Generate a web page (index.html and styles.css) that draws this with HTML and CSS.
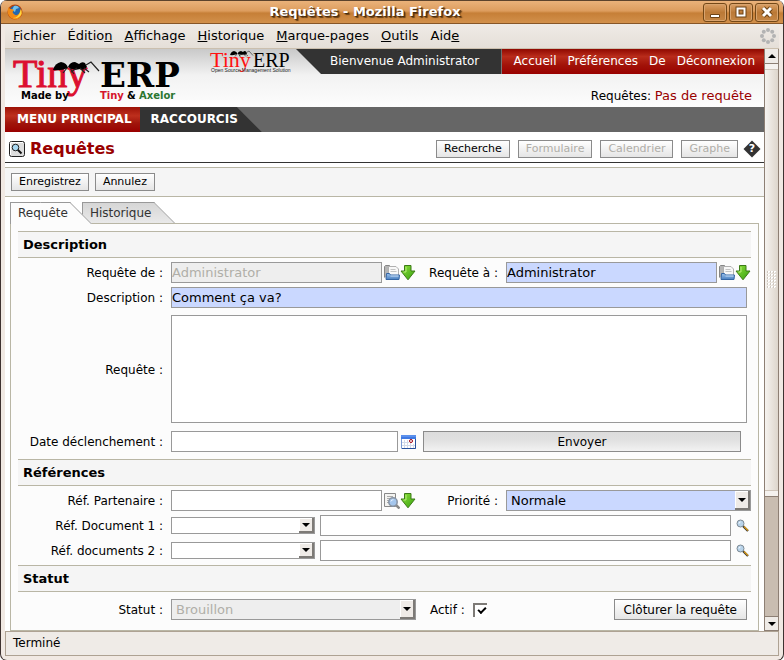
FILE: index.html
```html
<!DOCTYPE html>
<html lang="fr">
<head>
<meta charset="utf-8">
<title>Requêtes - Mozilla Firefox</title>
<link rel="stylesheet" href="styles.css">
</head>
<body>
<svg class="defs" width="0" height="0" aria-hidden="true">
  <defs>
    <linearGradient id="green" x1="0" y1="0" x2="1" y2="1"><stop offset="0" stop-color="#8fe03a"/><stop offset="1" stop-color="#35a010"/></linearGradient>
    <linearGradient id="blue" x1="0" y1="0" x2="0" y2="1"><stop offset="0" stop-color="#9cc2ec"/><stop offset="1" stop-color="#4a80c0"/></linearGradient>
    <symbol id="arrow" viewBox="0 0 16 16"><path d="M4.500 .5h6.500v5.500h4L8 14.800 1 6h3.500z" fill="url(#green)" stroke="#3c7a16"/><path d="M6 2v5H3.500" fill="none" stroke="#b4ee78"/></symbol>
    <symbol id="folder" viewBox="0 0 16 16"><path d="M.5 12.500V1.500l1-1h4l1 1.500h2v10" fill="#b5b5b5" stroke="#858585"/><path d="M4.500 1.500h7.500l2.500 2.500v6.500h-10z" fill="#f8f8f8" stroke="#b0b0b0"/><path d="M6.500 4.500h5M6.500 6.500h6" stroke="#c4c4c4"/><path d="M2.500 8.500h3l1 1.500h9l-.5 4.500H2z" fill="url(#blue)" stroke="#3465a4"/><path d="M6.500 11h8" stroke="#c5dcf5"/></symbol>
    <symbol id="find" viewBox="0 0 16 16"><path d="M.5.5h11v13H.5z" fill="#f3f3f1" stroke="#888"/><path d="M3 3.500h6M3 5.500h3M3 7.500h2M3 9.500h2" stroke="#aaa"/><path d="M12 12l3.500 3.500" stroke="#888" stroke-width="2.500"/><circle cx="9" cy="9" r="4.200" fill="#a4c6ed" stroke="#8793a3" stroke-width="1.500"/><path d="M6.800 8.500Q7.500 6.500 9.500 6.700" fill="none" stroke="#e6f1ff"/></symbol>
    <symbol id="lens" viewBox="0 0 13 13"><path d="M7 7l5 5" stroke="#333" stroke-width="2.200"/><path d="M8 7.500l4 4" stroke="#dd9d18" stroke-width="1.200"/><circle cx="4.500" cy="4.500" r="3.500" fill="#b8d3ea" stroke="#7d8993"/><path d="M3 4.500q0-1.500 1.500-1.500" fill="none" stroke="#fff"/></symbol>
    <symbol id="ants" viewBox="0 0 48 20"><path d="M0 10Q2 3 8 2Q14 3 15 8Q8 11 0 10z"/><path d="M15 7Q17 2 22 2L26 4Q29 1 32 3L34 7Q31 11 27 9Q20 11 15 7z"/><path d="M14 8l-4 5M17 8l4 6M24 8l-6 4M27 8l5 5M31 8l5 4M33 5l5-3 8 9" fill="none" stroke="#222" stroke-width="1.200"/></symbol>
  </defs>
</svg>
<div class="window">
  <header class="titlebar">
    <svg class="firefox" viewBox="0 0 16 16"><circle cx="8" cy="8" r="7.500" fill="#b6440c"/><circle cx="8.500" cy="7" r="5.500" fill="#2368ae"/><path d="M7 2q4-1 5 2l-3 1-1 3-3-2z" fill="#72c3ed"/><path d="M1.500 3L3 5q2-.5 4 1L5.500 8Q7 12 10 11q3-1 3.500-6 3 5-.5 8.500-4 3.500-9 .5Q-1 10 1.500 3z" fill="#f08a16"/><path d="M14 5q2 5-2 8-3 2-6 1 6 0 8-9z" fill="#ffd83f"/></svg>
    <h1 class="window-title">Requêtes - Mozilla Firefox</h1>
    <div class="window-buttons">
      <button type="button" aria-label="Réduire"><svg viewBox="0 0 22 17"><path d="M6.500 10.500h9v3h-9z" fill="#fff" stroke="#6d4315"/></svg></button>
      <button type="button" aria-label="Agrandir"><svg viewBox="0 0 22 17"><path d="M7.500 4.500h7v7h-7z" fill="none" stroke="#6d4315" stroke-width="4"/><path d="M7.500 4.500h7v7h-7z" fill="none" stroke="#fff" stroke-width="2"/></svg></button>
      <button type="button" aria-label="Fermer"><svg viewBox="0 0 22 17"><path d="M7 4l8 8M15 4l-8 8" stroke="#6d4315" stroke-width="5"/><path d="M7 4l8 8M15 4l-8 8" stroke="#fff" stroke-width="3"/></svg></button>
    </div>
  </header>
  <nav class="menubar">
    <a href="#"><u>F</u>ichier</a><a href="#">Éditio<u>n</u></a><a href="#"><u>A</u>ffichage</a><a href="#"><u>H</u>istorique</a><a href="#"><u>M</u>arque-pages</a><a href="#"><u>O</u>utils</a><a href="#">Aid<u>e</u></a>
    <svg class="throbber" viewBox="0 0 16 16" fill="#b3b3b3"><circle cx="8" cy="2" r="2"/><circle cx="12.200" cy="3.800" r="2"/><circle cx="14" cy="8" r="2"/><circle cx="12.200" cy="12.200" r="2"/><circle cx="8" cy="14" r="2"/><circle cx="3.800" cy="12.200" r="2"/><circle cx="2" cy="8" r="2"/><circle cx="3.800" cy="3.800" r="2"/></svg>
  </nav>
  <div class="viewport">
    <main class="page">
      <div class="banner">
        <svg class="logo" viewBox="0 0 180 50">
          <text x="0" y="38" class="logo-tiny">Tiny</text>
          <text x="87" y="38" class="logo-erp">ERP</text>
          <use href="#ants" x="40" y="11" width="48" height="20"/>
          <text x="8" y="50" class="logo-made">Made by</text>
          <text x="87" y="50" class="logo-made red">Tiny</text>
          <text x="114" y="50" class="logo-made">&amp;</text>
          <text x="126" y="50" class="logo-made green">Axelor</text>
        </svg>
        <svg class="logo-small" viewBox="0 0 86 26">
          <text x="0" y="18" class="small-tiny">Tiny</text>
          <text x="43" y="18" class="small-erp">ERP</text>
          <use href="#ants" x="20" y="1" width="24" height="10"/>
          <text x="1" y="23" class="small-line">Open Source Management Solution</text>
        </svg>
        <div class="account">
          <div class="account-bar">
            <span class="welcome">Bienvenue Administrator</span>
            <nav class="account-links"><a href="#">Accueil</a><a href="#">Préférences</a><a href="#">De</a><a href="#">Déconnexion</a></nav>
          </div>
          <p class="requests">Requêtes: <a href="#">Pas de requête</a></p>
        </div>
      </div>
      <nav class="mainnav"><a class="main" href="#">MENU PRINCIPAL</a><a class="shortcuts" href="#">RACCOURCIS</a></nav>
      <div class="heading">
        <svg class="search-icon" viewBox="0 0 16 16"><rect x=".5" y=".5" width="15" height="15" rx="2" fill="#ddd" stroke="#222"/><path d="M1.500 14V1.500H14" stroke="#fff" fill="none"/><path d="M8.500 8.500l4 4" stroke="#111" stroke-width="2"/><circle cx="6.500" cy="6.500" r="3.300" fill="#a8d8f2" stroke="#222"/></svg>
        <h2>Requêtes</h2>
        <div class="views">
          <button class="btn" type="button">Recherche</button><button class="btn" type="button" disabled>Formulaire</button><button class="btn" type="button" disabled>Calendrier</button><button class="btn" type="button" disabled>Graphe</button>
        </div>
        <a class="help" href="#" aria-label="Aide">?</a>
      </div>
      <div class="toolbar"><button class="btn" type="button">Enregistrez</button><button class="btn" type="button">Annulez</button></div>
      <div class="tabs"><button class="tab active" type="button"><span>Requête</span></button><button class="tab" type="button"><span>Historique</span></button></div>
      <form class="panel">
        <h3>Description</h3>
        <div class="fields">
          <label for="from">Requête de :</label>
          <div class="cell"><input id="from" type="text" value="Administrator" disabled><svg class="icon"><use href="#folder"/></svg><svg class="icon"><use href="#arrow"/></svg></div>
          <label for="to">Requête à :</label>
          <div class="cell"><input id="to" class="required" type="text" value="Administrator"><svg class="icon"><use href="#folder"/></svg><svg class="icon"><use href="#arrow"/></svg></div>
          <label for="desc">Description :</label>
          <div class="cell wide inset"><input id="desc" class="required" type="text" value="Comment ça va?"></div>
          <label for="body">Requête :</label>
          <div class="cell wide inset"><textarea id="body"></textarea></div>
          <label for="date">Date déclenchement :</label>
          <div class="wide date-row"><input id="date" type="text">
            <svg class="calendar" viewBox="0 0 15 14"><path d="M.5.5h14v13H.5z" fill="#fff" stroke="#7c9bd6"/><path d="M0 0h15v4H0z" fill="#3f79e2"/><path d="M0 1h15" stroke="#76a6f5"/><path d="M14.500 4v9.500H1" fill="none" stroke="#27509c"/><path d="M3.500 5v8M6.500 5v8M9.500 5v8M12.500 9v4M1 7.500h7M1 10.500h13" stroke="#d3daea"/><circle cx="10" cy="6" r="1.500" fill="#fff" stroke="#a00010"/></svg>
            <button class="btn send" type="button">Envoyer</button></div>
        </div>
        <h3 class="after-date">Références</h3>
        <div class="fields">
          <label for="partner">Réf. Partenaire :</label>
          <div class="cell"><input id="partner" type="text"><svg class="icon"><use href="#find"/></svg><svg class="icon"><use href="#arrow"/></svg></div>
          <label for="prio">Priorité :</label>
          <div class="select"><select id="prio" class="required"><option>Normale</option></select><i></i></div>
          <label for="doc1">Réf. Document 1 :</label>
          <div class="cell wide doc"><div class="select short"><select id="doc1"><option></option></select><i></i></div><input type="text" aria-label="Document 1"><svg class="lens"><use href="#lens"/></svg></div>
          <label for="doc2">Réf. documents 2 :</label>
          <div class="cell wide doc"><div class="select short"><select id="doc2"><option></option></select><i></i></div><input type="text" aria-label="Document 2"><svg class="lens"><use href="#lens"/></svg></div>
        </div>
        <h3>Statut</h3>
        <div class="fields status-row">
          <label for="state">Statut :</label>
          <div class="select"><select id="state" disabled><option>Brouillon</option></select><i></i></div>
          <div class="cell active-cell"><label for="active">Actif :</label><input id="active" type="checkbox" checked><button class="btn close" type="button">Clôturer la requête</button></div>
        </div>
      </form>
    </main>
    <div class="scrollbar">
      <button class="up" type="button" aria-label="Haut"></button>
      <div class="track"><div class="thumb"><span class="grip"></span></div></div>
      <button class="down" type="button" aria-label="Bas"></button>
    </div>
  </div>
  <footer class="statusbar">Terminé</footer>
</div>
</body>
</html>
```
FILE: styles.css
```css
* { box-sizing: border-box; }
body { margin: 0; background: #fff; color: #000; font: 12px/16px "DejaVu Sans", sans-serif; }
h1, h2, h3, p { margin: 0; }
button, input, select, textarea { font: inherit; margin: 0; border-radius: 0; }
a { color: inherit; text-decoration: none; }
svg { display: block; flex: none; }
.defs { position: absolute; }

.window { min-height: 100vh; display: flex; flex-direction: column; padding: 0 4px 4px; border: 1px solid #3e3230; border-top: 0; border-radius: 7px; background: #f1e9e3; overflow: hidden; }

.titlebar { display: flex; align-items: center; height: 24px; margin: 0 -4px; padding: 0 4px 0 6px; border-top: 1px solid #5c432c; border-bottom: 1px solid #875627; background: linear-gradient(#eab27a, #dd9d5e 45%, #c67f37 55%, #d2904b); }
.firefox { width: 16px; height: 16px; }
.window-title { flex: 1; padding-left: 4px; text-align: center; font-size: 13px; color: #fff; text-shadow: 1px 1px 1px #40260c, 2px 2px 1px #6b4216; }
.window-buttons { display: flex; gap: 2px; }
.window-buttons button { width: 24px; height: 19px; padding: 0; border: 1px solid #744817; border-radius: 3px; background: linear-gradient(#dba066, #bb7936 50%, #c58645); box-shadow: inset 0 0 0 1px #d9a46e; }

.menubar { display: flex; align-items: center; gap: 12px; height: 25px; padding: 0 3px 0 8px; font-size: 13px; background: linear-gradient(#efebe6, #e5dfd8); border-bottom: 1px solid #cbbfae; }
.throbber { width: 16px; height: 16px; margin-left: auto; }

.viewport { flex: 1; display: flex; }
.page { flex: 1; min-width: 0; display: flex; flex-direction: column; background: #fff; }

.banner { display: flex; height: 58px; background: linear-gradient(#c9c9c9, #f2f2f2 45%, #fdfdfd); }
.logo { width: 180px; height: 50px; margin-left: 8px; overflow: visible; }
.logo-tiny { font: 40px "Liberation Serif", serif; fill: #dc1030; stroke: #dc1030; stroke-width: 1; }
.logo-erp { font: bold 34px "DejaVu Serif", serif; }
.logo-made { font: bold 10px "DejaVu Sans", sans-serif; }
.logo-made.red { fill: #d5152c; }
.logo-made.green { fill: #2b7631; }
.logo-small { width: 86px; height: 26px; margin-left: 17px; overflow: visible; }
.small-tiny { font: 22px "Liberation Serif", serif; fill: #f11; }
.small-erp { font: 20px "Liberation Serif", serif; }
.small-line { font: 5px "Liberation Sans", sans-serif; fill: #222; }
.account { flex: 1; }
.account-bar { display: flex; height: 25px; line-height: 25px; color: #fff; }
.welcome { flex: 1; padding-left: 34px; background: #333; clip-path: polygon(0 0, 100% 0, 100% 100%, 25px 100%); }
.account-links { display: flex; gap: 11px; padding: 0 9px 0 12px; background: linear-gradient(#8f0800, #b92c1b 30%, #a11208 65%, #900); }
.requests { padding: 14px 12px 0; text-align: right; }
.requests a { color: #900; font-size: 13px; }

.mainnav { display: flex; height: 25px; line-height: 25px; font-weight: bold; color: #fff; background: #666; }
.main { padding: 0 8px 0 12px; background: linear-gradient(#9d1207, #bd2f1d 35%, #a0150b 65%, #900); }
.shortcuts { padding: 0 24px 0 11px; background: #333; clip-path: polygon(0 0, calc(100% - 25px) 0, 100% 100%, 0 100%); }

.heading { display: flex; align-items: center; height: 31px; padding: 4px 4px 0; border-bottom: 1px solid #333; }
.search-icon { width: 16px; height: 16px; }
.heading h2 { margin-left: 5px; font-size: 16px; line-height: 24px; color: #900; }
.views { display: flex; gap: 8px; margin-left: auto; }
.btn { height: 18px; padding: 0 7px; border: 1px solid #8b8b8b; background: linear-gradient(#fff, #e5e5e5); color: #000; font-size: 11px; line-height: 14px; white-space: nowrap; }
.btn:disabled { color: #b0aea8; }
.help { position: relative; z-index: 0; width: 16px; margin-left: 6px; color: #fff; font-weight: bold; font-size: 11px; text-align: center; }
.help::before { content: ""; position: absolute; z-index: -1; inset: 2px; background: #333; transform: rotate(45deg); }

.toolbar { display: flex; align-items: center; gap: 6px; height: 30px; margin-top: 4px; padding: 0 6px; background: #f5f5f5; border: solid #b9b6a5; border-width: 1px 0; }

.tabs { display: flex; gap: 12px; margin: 5px 5px 0; }
.tab { position: relative; height: 21px; padding: 0 2px 0 8px; border: 0; background: none; color: #333; }
.tab span { position: relative; z-index: 1; }
.tab::before, .tab::after { content: ""; position: absolute; top: 0; bottom: 0; background: linear-gradient(#d6d6d6, #e9e9e9); border-top: 1px solid #999; }
.tab::before { left: 0; right: 0; border-left: 1px solid #999; }
.tab::after { left: 50%; right: 0; border-right: 1px solid #999; transform: skewX(45deg); transform-origin: top; }
.active { z-index: 1; }
.active::before, .active::after { bottom: -1px; background: #fcfcfc; }

.panel { flex: 1; margin: 0 5px; padding: 7px; border: 1px solid #b9b6a5; background: #fcfcfc; }
h3 { height: 27px; margin-bottom: 4px; padding-left: 5px; border: solid #b9b6a5; border-width: 1px 0; background: #f5f5f5; font-size: 13px; line-height: 25px; }
.fields { display: grid; grid-template-columns: 145px 1fr 74px 1fr; gap: 4px 8px; margin-bottom: 4px; align-items: center; }
.fields label { text-align: right; white-space: nowrap; }
.cell { display: flex; align-items: center; min-width: 0; }
.wide { grid-column: 2 / 5; }
.inset { padding-right: 4px; }
input[type="text"] { flex: 1; min-width: 0; width: 100%; height: 21px; padding: 0; border: 1px solid #999; background: #fff; font-size: 13px; color: #000; }
textarea { width: 100%; height: 108px; margin: 3px 0 4px; border: 1px solid #999; background: #fff; resize: none; }
input.required, select.required { background: #cad8ff; }
input:disabled, select:disabled { background: #eee; color: #b0aea8; opacity: 1; }
.icon { width: 16px; height: 16px; }
.cell input + .icon { margin-left: 2px; }
.date-row { display: grid; grid-template-columns: 227fr 25px 318fr; align-items: center; padding-right: 10px; }
.calendar { width: 15px; height: 14px; margin-left: 3px; }
.send { background: linear-gradient(#dcdcdc, #e0e0e0 40%, #f2f2f2); }
.send, .close { height: 21px; font-size: 12px; }
.after-date { margin-top: 7px; }

.select { position: relative; height: 21px; }
select { appearance: none; width: 100%; height: 100%; padding: 0 20px 0 4px; border: 1px solid #999; background: #fff; color: #000; display: block; font-size: 13px; }
.select i { position: absolute; top: 1px; right: 1px; bottom: 1px; width: 15px; background: #efebe7; border: solid #7d7a76; border-width: 0 2px 2px 0; box-shadow: inset 1px 1px #fff; pointer-events: none; }
.select i::after { content: ""; position: absolute; left: 3px; top: 50%; margin-top: -2px; border: 4px solid transparent; border-top-color: #000; border-bottom: 0; }
.select.short { width: 144px; height: 17px; margin-right: 5px; }
.lens { width: 13px; height: 13px; margin: 0 2px 0 5px; }

.status-row { margin: 7px 0 3px; grid-template-columns: 145px 1fr 327px; }
.active-cell { padding: 0 4px 0 6px; }
.active-cell input { appearance: none; position: relative; width: 14px; height: 14px; margin-left: 8px; background: #fff; border: solid #7d7a76; border-width: 2px 0 0 2px; }
.active-cell input:checked::after { content: ""; position: absolute; left: 3px; top: 2px; width: 6px; height: 3px; border: solid #000; border-width: 0 0 2px 2px; transform: rotate(-45deg); }
.close { margin-left: auto; padding: 0 9px; }

.scrollbar { display: flex; flex-direction: column; width: 15px; border-left: 1px solid #8d7f74; border-right: 1px solid #8d7f74; }
.scrollbar button { position: relative; height: 15px; padding: 0; border: 0; border-bottom: 1px solid #8d7f74; background: #efebe7; }
.scrollbar button::after { content: ""; position: absolute; left: 3px; top: 5px; border: 4px solid transparent; border-top: 0; border-bottom-color: #000; }
.scrollbar .down { border-top: 1px solid #8d7f74; }
.scrollbar .down::after { border-top: 4px solid #000; border-bottom: 0; }
.track { flex: 1; display: flex; flex-direction: column; background: #c9bdb1; }
.thumb { flex: 0 0 78.5%; display: flex; align-items: center; justify-content: center; background: linear-gradient(90deg, #f6f3f0, #ddd5cc); border-bottom: 1px solid #8d7f74; box-shadow: inset 0 5px #f5f2ef, inset 0 6px #cfc5ba, inset 0 -5px #f5f2ef, inset 0 -6px #cfc5ba; }
.grip { width: 9px; height: 18px; background: conic-gradient(#fff 25%, transparent 0 75%, #cfc8c0 0) 0 0 / 3px 3px; }

.statusbar { height: 25px; padding: 0 7px; line-height: 23px; background: #efebe7; border: 1px solid #aea293; }
```
